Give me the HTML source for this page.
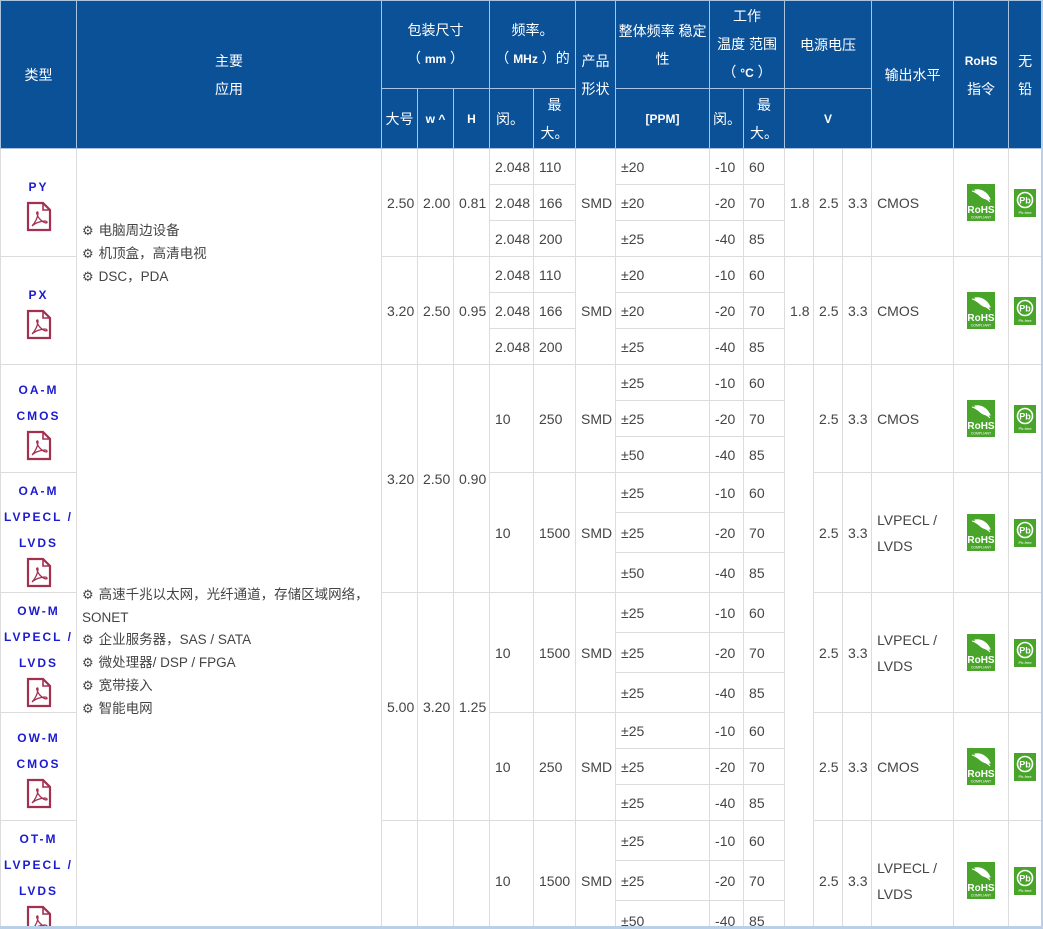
<!DOCTYPE html>
<html><head><meta charset="utf-8">
<style>
html,body{margin:0;padding:0;background:#fff;width:1043px;height:929px;overflow:hidden}
table{border-collapse:collapse;table-layout:fixed;width:1042px;font-family:"Liberation Sans","Noto Sans CJK SC",sans-serif;font-size:14px;color:#444}
td,th{padding:0 0 0 5px;border:1px solid #dcdcdc;text-align:left;vertical-align:middle;white-space:nowrap;overflow:hidden}
th{background:#0b5198;color:#fff;font-weight:normal;text-align:center;border:1px solid #a9c3e0;line-height:28px;padding:0 2px;white-space:normal}
th b{font-weight:bold;font-size:12px}
.t{text-align:center;padding:0}
.t svg{display:block;margin:1px auto 0}
.lab{color:#1b1bd0;font-weight:bold;font-size:12px;letter-spacing:2px;line-height:26px;display:block}
.app{font-size:13.5px;line-height:22px;white-space:normal;padding-left:5px;color:#444}
.g{font-family:"DejaVu Sans",sans-serif;font-size:13px;color:#444;margin-right:5px}
.ic{text-align:center;padding:0}
.ic svg{display:block;margin:0 auto}
tr.a td{height:35px}
tr.b td{height:39px}
.edge{position:absolute;background:#b9d0ea}
</style></head><body>
<svg width="0" height="0" style="position:absolute">
<defs>
<symbol id="pdf" viewBox="0 0 26 31"><path d="M2 2h15l7 7v20H2z" fill="#fff" stroke="#a33050" stroke-width="2.2"/><path d="M17 2v7h7" fill="none" stroke="#a33050" stroke-width="1.6"/><path d="M6 25c3-3 6-9 6-13 0-2-2-1-1 1 1 4 5 8 9 9 2 0 1-2-1-2-4 0-10 2-13 5z" fill="none" stroke="#a33050" stroke-width="1.3"/></symbol>
<symbol id="rohs" viewBox="0 0 28 37"><rect width="28" height="37" fill="#48a52a"/><path d="M5 7c6 1 12 4 18 11M8 6c6-1 12 2 15 9-6 1-11-3-15-9z" fill="#fff" stroke="#fff" stroke-width="1"/><text x="14" y="29" font-family="Liberation Sans" font-weight="bold" font-size="10" fill="#fff" text-anchor="middle">RoHS</text><text x="14" y="34.5" font-family="Liberation Sans" font-size="3.5" fill="#fff" text-anchor="middle">COMPLIANT</text></symbol>
<symbol id="pb" viewBox="0 0 22 28"><rect width="22" height="28" fill="#48a52a"/><circle cx="11" cy="11" r="7.5" fill="none" stroke="#fff" stroke-width="1.6"/><text x="11" y="14.5" font-family="Liberation Sans" font-weight="bold" font-size="9" fill="#fff" text-anchor="middle">Pb</text><text x="11" y="25" font-family="Liberation Sans" font-size="4" fill="#fff" text-anchor="middle">Pb-free</text></symbol>
</defs></svg>
<table>
<colgroup><col style="width:76px"><col style="width:305px"><col style="width:36px"><col style="width:36px"><col style="width:36px"><col style="width:44px"><col style="width:42px"><col style="width:40px"><col style="width:94px"><col style="width:34px"><col style="width:41px"><col style="width:29px"><col style="width:29px"><col style="width:29px"><col style="width:82px"><col style="width:55px"><col style="width:33px"></colgroup>
<tr style="height:88px">
<th rowspan="2">类型</th><th rowspan="2">主要<br>应用</th>
<th colspan="3">包装尺寸<br>（ <b>mm</b> ）</th>
<th colspan="2">频率。<br>（ <b>MHz</b> ）的</th>
<th rowspan="2">产品<br>形状</th>
<th>整体频率 稳定性</th>
<th colspan="2">工作<br>温度 范围<br>（ <b>°C</b> ）</th>
<th colspan="3">电源电压</th>
<th rowspan="2">输出水平</th>
<th rowspan="2"><b>RoHS</b><br>指令</th>
<th rowspan="2">无<br>铅</th>
</tr>
<tr style="height:60px">
<th>大号</th><th><b>w ^</b></th><th><b>H</b></th>
<th style="text-align:left;padding-left:6px">闵。</th><th>最<br>大。</th>
<th><b>[PPM]</b></th>
<th style="text-align:left;padding-left:3px">闵。</th><th>最<br>大。</th>
<th colspan="3"><b>V</b></th>
</tr>
<tr class="a"><td rowspan="3" class="t"><span class="lab">PY</span><svg width="26" height="31"><use href="#pdf"/></svg></td>
<td rowspan="6" class="app" style="padding-bottom:4px"><span class="g">⚙</span>电脑周边设备<br><span class="g">⚙</span>机顶盒，高清电视<br><span class="g">⚙</span>DSC，PDA</td>
<td rowspan="3">2.50</td><td rowspan="3">2.00</td><td rowspan="3">0.81</td>
<td>2.048</td><td>110</td><td rowspan="3">SMD</td><td>±20</td><td>-10</td><td>60</td>
<td rowspan="3">1.8</td><td rowspan="3">2.5</td><td rowspan="3">3.3</td><td rowspan="3">CMOS</td>
<td rowspan="3" class="ic"><svg width="28" height="37"><use href="#rohs"/></svg></td>
<td rowspan="3" class="ic"><svg width="22" height="28"><use href="#pb"/></svg></td></tr>
<tr class="a"><td>2.048</td><td>166</td><td>±20</td><td>-20</td><td>70</td></tr>
<tr class="a"><td>2.048</td><td>200</td><td>±25</td><td>-40</td><td>85</td></tr>
<tr class="a"><td rowspan="3" class="t"><span class="lab">PX</span><svg width="26" height="31"><use href="#pdf"/></svg></td>
<td rowspan="3">3.20</td><td rowspan="3">2.50</td><td rowspan="3">0.95</td>
<td>2.048</td><td>110</td><td rowspan="3">SMD</td><td>±20</td><td>-10</td><td>60</td>
<td rowspan="3">1.8</td><td rowspan="3">2.5</td><td rowspan="3">3.3</td><td rowspan="3">CMOS</td>
<td rowspan="3" class="ic"><svg width="28" height="37"><use href="#rohs"/></svg></td>
<td rowspan="3" class="ic"><svg width="22" height="28"><use href="#pb"/></svg></td></tr>
<tr class="a"><td>2.048</td><td>166</td><td>±20</td><td>-20</td><td>70</td></tr>
<tr class="a"><td>2.048</td><td>200</td><td>±25</td><td>-40</td><td>85</td></tr>
<tr class="a"><td rowspan="3" class="t"><span class="lab">OA-M</span><span class="lab">CMOS</span><svg width="26" height="31"><use href="#pdf"/></svg></td>
<td rowspan="15" class="app"><span class="g">⚙</span>高速千兆以太网，光纤通道，存储区域网络，<br>SONET<br><span class="g">⚙</span>企业服务器，SAS / SATA<br><span class="g">⚙</span>微处理器/ DSP / FPGA<br><span class="g">⚙</span>宽带接入<br><span class="g">⚙</span>智能电网</td>
<td rowspan="6">3.20</td><td rowspan="6">2.50</td><td rowspan="6">0.90</td>
<td rowspan="3">10</td><td rowspan="3">250</td><td rowspan="3">SMD</td><td>±25</td><td>-10</td><td>60</td>
<td rowspan="15"></td><td rowspan="3">2.5</td><td rowspan="3">3.3</td><td rowspan="3">CMOS</td>
<td rowspan="3" class="ic"><svg width="28" height="37"><use href="#rohs"/></svg></td>
<td rowspan="3" class="ic"><svg width="22" height="28"><use href="#pb"/></svg></td></tr>
<tr class="a"><td>±25</td><td>-20</td><td>70</td></tr>
<tr class="a"><td>±50</td><td>-40</td><td>85</td></tr>
<tr class="b"><td rowspan="3" class="t"><span class="lab">OA-M</span><span class="lab">LVPECL /</span><span class="lab">LVDS</span><svg width="26" height="31"><use href="#pdf"/></svg></td>
<td rowspan="3">10</td><td rowspan="3">1500</td><td rowspan="3">SMD</td><td>±25</td><td>-10</td><td>60</td>
<td rowspan="3">2.5</td><td rowspan="3">3.3</td><td rowspan="3" style="white-space:normal;line-height:26px">LVPECL / LVDS</td>
<td rowspan="3" class="ic"><svg width="28" height="37"><use href="#rohs"/></svg></td>
<td rowspan="3" class="ic"><svg width="22" height="28"><use href="#pb"/></svg></td></tr>
<tr class="b"><td>±25</td><td>-20</td><td>70</td></tr>
<tr class="b"><td>±50</td><td>-40</td><td>85</td></tr>
<tr class="b"><td rowspan="3" class="t"><span class="lab">OW-M</span><span class="lab">LVPECL /</span><span class="lab">LVDS</span><svg width="26" height="31"><use href="#pdf"/></svg></td>
<td rowspan="6">5.00</td><td rowspan="6">3.20</td><td rowspan="6">1.25</td>
<td rowspan="3">10</td><td rowspan="3">1500</td><td rowspan="3">SMD</td><td>±25</td><td>-10</td><td>60</td>
<td rowspan="3">2.5</td><td rowspan="3">3.3</td><td rowspan="3" style="white-space:normal;line-height:26px">LVPECL / LVDS</td>
<td rowspan="3" class="ic"><svg width="28" height="37"><use href="#rohs"/></svg></td>
<td rowspan="3" class="ic"><svg width="22" height="28"><use href="#pb"/></svg></td></tr>
<tr class="b"><td>±25</td><td>-20</td><td>70</td></tr>
<tr class="b"><td>±25</td><td>-40</td><td>85</td></tr>
<tr class="a"><td rowspan="3" class="t"><span class="lab">OW-M</span><span class="lab">CMOS</span><svg width="26" height="31"><use href="#pdf"/></svg></td>
<td rowspan="3">10</td><td rowspan="3">250</td><td rowspan="3">SMD</td><td>±25</td><td>-10</td><td>60</td>
<td rowspan="3">2.5</td><td rowspan="3">3.3</td><td rowspan="3">CMOS</td>
<td rowspan="3" class="ic"><svg width="28" height="37"><use href="#rohs"/></svg></td>
<td rowspan="3" class="ic"><svg width="22" height="28"><use href="#pb"/></svg></td></tr>
<tr class="a"><td>±25</td><td>-20</td><td>70</td></tr>
<tr class="a"><td>±25</td><td>-40</td><td>85</td></tr>
<tr class="b"><td rowspan="3" class="t"><span class="lab">OT-M</span><span class="lab">LVPECL /</span><span class="lab">LVDS</span><svg width="26" height="31"><use href="#pdf"/></svg></td>
<td rowspan="3"></td><td rowspan="3"></td><td rowspan="3"></td>
<td rowspan="3">10</td><td rowspan="3">1500</td><td rowspan="3">SMD</td><td>±25</td><td>-10</td><td>60</td>
<td rowspan="3">2.5</td><td rowspan="3">3.3</td><td rowspan="3" style="white-space:normal;line-height:26px">LVPECL / LVDS</td>
<td rowspan="3" class="ic"><svg width="28" height="37"><use href="#rohs"/></svg></td>
<td rowspan="3" class="ic"><svg width="22" height="28"><use href="#pb"/></svg></td></tr>
<tr class="b"><td>±25</td><td>-20</td><td>70</td></tr>
<tr class="b"><td>±50</td><td>-40</td><td>85</td></tr>
</table>
<div class="edge" style="left:0;top:926px;width:1043px;height:3px"></div>
<div class="edge" style="left:1041px;top:0;width:2px;height:929px"></div>
</body></html>
